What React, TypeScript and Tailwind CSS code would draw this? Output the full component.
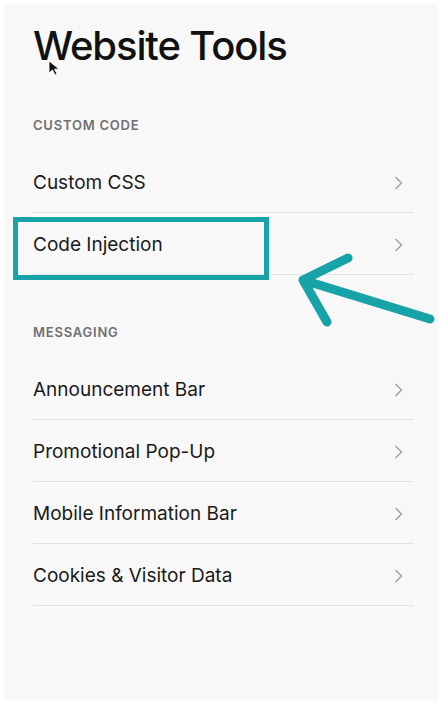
const sections = [
  { label: "Custom Code", items: ["Custom CSS", "Code Injection"] },
  {
    label: "Messaging",
    items: [
      "Announcement Bar",
      "Promotional Pop-Up",
      "Mobile Information Bar",
      "Cookies & Visitor Data",
    ],
  },
];

const Chevron = () => (
  <svg width="10" height="14" viewBox="0 0 10 14" fill="none" className="shrink-0">
    <path d="M2 1.5 L7.5 7 L2 12.5" stroke="#a3a3a3" strokeWidth="1.6" strokeLinecap="round" strokeLinejoin="round" />
  </svg>
);

export default function App() {
  return (
    <div className="w-[442px] h-[705px] bg-white p-[4px] font-['Inter',sans-serif]">
      <div className="relative h-[697px] bg-[#f8f8f8] pl-[29px] pr-[24px] pt-[18px]">
        <h1 className="text-[40px] leading-[48px] font-medium tracking-[-0.028em] text-[#111]">
          Website Tools
        </h1>

        {sections.map((section, i) => (
          <section key={section.label} className={i === 0 ? "mt-[47px]" : "mt-[49px]"}>
            <h2 className="text-[13px] leading-[16px] font-semibold uppercase tracking-[0.06em] text-[#707070] mb-[18px]">
              {section.label}
            </h2>
            <ul>
              {section.items.map((item) => (
                <li
                  key={item}
                  className="flex items-center justify-between h-[62px] border-b border-[#e2e2e2] pr-[10px] pt-[3px]"
                >
                  <span className="text-[19px] text-[#1a1a1a]">{item}</span>
                  <Chevron />
                </li>
              ))}
            </ul>
          </section>
        ))}

        {/* highlight box round Code Injection */}
        <div className="absolute left-[9px] top-[213px] w-[256px] h-[63px] border-[5px] border-[#17a3a8]" />

        {/* hand-drawn arrow */}
        <svg className="absolute left-0 top-0" width="437" height="697" viewBox="4 4 437 697" fill="none">
          <path
            d="M348 258 L303 280 L327 322 M303 280 L430 319"
            stroke="#17a3a8"
            strokeWidth="9"
            strokeLinecap="round"
            strokeLinejoin="round"
          />
        </svg>

        {/* mouse cursor */}
        <svg className="absolute left-[44px] top-[56px]" width="14" height="16" viewBox="0 0 14 16">
          <path d="M1 1 L1 13 L4.5 10 L7 15 L9 14 L6.5 9.2 L11 9 Z" fill="#111" stroke="#fff" strokeWidth="0.8" />
        </svg>
      </div>
    </div>
  );
}
